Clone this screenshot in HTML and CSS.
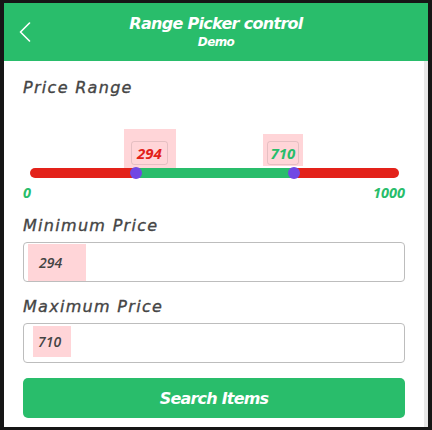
FILE: index.html
```html
<!DOCTYPE html>
<html>
<head>
<meta charset="utf-8">
<link rel="stylesheet" href="styles.css">
</head>
<body>
<div class="frame">
  <header class="topbar">
    <div class="back">
      <svg width="12" height="20" viewBox="0 0 12 20"><path d="M10.5 1 L1.5 10 L10.5 19" fill="none" stroke="#fff" stroke-width="1.6" stroke-linecap="round" stroke-linejoin="round"/></svg>
    </div>
    <div class="titles">
      <div class="title">Range Picker control</div>
      <div class="subtitle">Demo</div>
    </div>
    <div class="spacer"></div>
  </header>
  <main class="content">
    <div class="label first">Price Range</div>
    <div class="slider">
      <div class="tip tip-min"><span class="tip-box red">294</span></div>
      <div class="tip tip-max"><span class="tip-box green">710</span></div>
      <div class="track"></div>
      <span class="thumb" style="left:107px"></span>
      <span class="thumb" style="left:265px"></span>
      <div class="scale"><span>0</span><span>1000</span></div>
    </div>
    <div class="label">Minimum Price</div>
    <div class="field"><span class="val val-min">294</span></div>
    <div class="label">Maximum Price</div>
    <div class="field"><span class="val val-max">710</span></div>
    <button class="search">Search Items</button>
  </main>
</div>
</body>
</html>
```
FILE: styles.css
```css
html, body { margin: 0; padding: 0; }
body {
  background: #161616;
  width: 432px;
  height: 430px;
  overflow: hidden;
  font-family: "DejaVu Sans", "Open Sans", sans-serif;
}
.frame {
  margin: 3px 4px 0 4px;
  width: 424px;
  height: 424px;
  background: #fff;
  display: flex;
  flex-direction: column;
}
.topbar {
  height: 58px;
  background: #29bd6b;
  display: flex;
  align-items: center;
  color: #fff;
}
.back {
  width: 40px;
  padding-left: 15px;
  box-sizing: border-box;
  display: flex;
  align-items: center;
  margin-top: -1px;
}
.spacer { width: 40px; }
.titles {
  flex: 1;
  text-align: center;
  font-style: italic;
  font-weight: 700;
  margin-top: -1px;
}
.title { font-size: 16px; line-height: 22px; letter-spacing: -0.7px; }
.subtitle { font-size: 12px; line-height: 15px; letter-spacing: -0.6px; }
.content {
  flex: 1;
  padding: 0 19px 0 19px;
  border-right: 4px solid #e8e8e8;
  display: flex;
  flex-direction: column;
}
.label {
  font-size: 16px;
  line-height: 22px;
  font-weight: 400;
  font-style: italic;
  color: #454545;
  -webkit-text-stroke: 0.35px #454545;
  letter-spacing: 1.3px;
  margin-top: 14px;
}
.label.first { margin-top: 16px; }
.slider {
  position: relative;
  padding-top: 69px;
}
.track {
  height: 10px;
  margin: 0 6px 0 7px;
  border-radius: 5px;
  background: linear-gradient(to right, #e3221a 0, #e3221a 105px, #29bd6b 105px, #29bd6b 266px, #e3221a 266px);
}
.thumb {
  position: absolute;
  top: 68px;
  width: 12px;
  height: 12px;
  border-radius: 50%;
  background: #7048e4;
}
.tip {
  position: absolute;
  background: #ffd5d8;
  box-sizing: border-box;
}
.tip-min { left: 101px; top: 30px; width: 52px; height: 39px; padding: 12px 0 0 7px; }
.tip-max { left: 240px; top: 35px; width: 40px; height: 32px; padding: 7px 0 0 4px; }
.tip-box {
  display: inline-block;
  border: 1px solid rgba(0,0,0,0.1);
  border-radius: 3px;
  height: 24px;
  line-height: 22px;
  box-sizing: border-box;
  font-family: "Open Sans", sans-serif;
  font-size: 15px;
  font-weight: 700;
  font-style: italic;
  text-align: center;
}
.tip-min .tip-box { width: 37px; }
.tip-max .tip-box { width: 32px; }
.red { color: #e3221a; }
.green { color: #29bd6b; }
.scale {
  display: flex;
  justify-content: space-between;
  margin-top: 6px;
  font-family: "Open Sans", sans-serif;
  font-size: 14.5px;
  line-height: 17px;
  font-weight: 700;
  font-style: italic;
  color: #29bd6b;
}
.field {
  margin-top: 5px;
  height: 40px;
  border: 1px solid #bdbdbd;
  border-radius: 4px;
  box-sizing: border-box;
  display: flex;
  align-items: center;
}
.val {
  background: #ffd5d8;
  font-family: "Open Sans", sans-serif;
  font-size: 14px;
  font-weight: 600;
  font-style: italic;
  color: #444;
  box-sizing: border-box;
}
.val-min { margin-left: 4px; width: 58px; height: 37px; line-height: 37px; padding-left: 11px; }
.val-max { margin-left: 9px; width: 38px; height: 31px; line-height: 31px; padding-left: 5px; margin-top: -3px; }
.search {
  margin-top: 15px;
  height: 40px;
  border: none;
  border-radius: 5px;
  background: #29bd6b;
  color: #fff;
  font-family: inherit;
  font-size: 16px;
  letter-spacing: -0.8px;
  font-weight: 700;
  font-style: italic;
}
```
